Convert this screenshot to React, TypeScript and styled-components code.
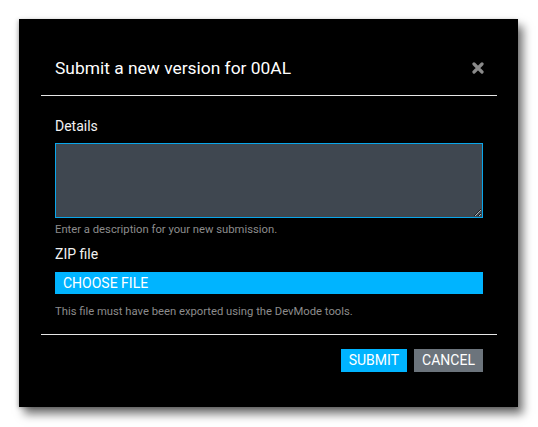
import styled, { createGlobalStyle } from "styled-components";

const GlobalStyle = createGlobalStyle`
  html, body {
    margin: 0;
    padding: 0;
    background: #ffffff;
  }
  body {
    font-family: Roboto, "Liberation Sans", Arial, sans-serif;
  }
`;

const Page = styled.div`
  padding: 19px 20px 20px 19px;
`;

const Modal = styled.div`
  width: 499px;
  height: 388px;
  box-sizing: border-box;
  padding: 0 21px 0 22px;
  background: #000000;
  color: #ffffff;
  box-shadow: 5px 7px 9px rgba(0, 0, 0, 0.55), -1px 1px 4px rgba(0, 0, 0, 0.25);
`;

const Header = styled.div`
  display: flex;
  align-items: center;
  justify-content: space-between;
  padding: 37px 13px 15px 14px;
  border-bottom: 1px solid #e6e6e6;
`;

const Title = styled.h2`
  margin: 0;
  font-size: 17.4px;
  line-height: 24px;
  font-weight: 400;
  color: #ffffff;
`;

const Close = styled.button`
  display: flex;
  padding: 0;
  border: none;
  background: none;
  cursor: pointer;
`;

const Body = styled.div`
  display: flex;
  flex-direction: column;
  padding: 20px 14px 15px;
  border-bottom: 1px solid #e6e6e6;
`;

const Label = styled.label<{ $gap: number }>`
  font-size: 14px;
  line-height: 20px;
  font-weight: 400;
  color: #f2f2f2;
  margin-bottom: ${(p) => p.$gap}px;
`;

const TextArea = styled.textarea`
  display: block;
  box-sizing: border-box;
  width: 100%;
  height: 75px;
  margin: 0;
  border: 1px solid #0aa6ea;
  background: #3f4750;
  color: #ffffff;
  font-family: inherit;
  resize: vertical;
  outline: none;
`;

const Help = styled.div<{ $top: number; $bottom: number }>`
  font-size: 11.25px;
  line-height: 15px;
  color: #8c8c8c;
  margin-top: ${(p) => p.$top}px;
  margin-bottom: ${(p) => p.$bottom}px;
`;

const FileBar = styled.button`
  display: block;
  width: 100%;
  height: 22px;
  padding: 0 8px;
  border: none;
  background: #00b4ff;
  color: #ffffff;
  font-family: inherit;
  font-size: 14px;
  line-height: 22px;
  font-weight: 400;
  text-align: left;
  text-transform: uppercase;
  cursor: pointer;
`;

const Footer = styled.div`
  display: flex;
  justify-content: flex-end;
  gap: 7px;
  padding: 14px 14px 0;
`;

const Button = styled.button<{ $variant: "primary" | "secondary" }>`
  height: 23px;
  min-width: ${(p) => (p.$variant === "primary" ? 66 : 69)}px;
  padding: 0 8px;
  border: none;
  background: ${(p) => (p.$variant === "primary" ? "#00b4ff" : "#6c747c")};
  color: #ffffff;
  font-family: inherit;
  font-size: 14px;
  line-height: 23px;
  font-weight: 400;
  text-transform: uppercase;
  cursor: pointer;
`;

function CloseIcon() {
  return (
    <svg width="12" height="12" viewBox="0 0 12 12">
      <path
        d="M2 2 L10 10 M10 2 L2 10"
        stroke="#8a8a8a"
        strokeWidth="3.2"
        strokeLinecap="round"
      />
    </svg>
  );
}

export default function App() {
  return (
    <Page>
      <GlobalStyle />
      <Modal>
        <Header>
          <Title>Submit a new version for 00AL</Title>
          <Close aria-label="Close">
            <CloseIcon />
          </Close>
        </Header>
        <Body>
          <Label $gap={7}>Details</Label>
          <TextArea />
          <Help $top={4} $bottom={7}>
            Enter a description for your new submission.
          </Help>
          <Label $gap={8}>ZIP file</Label>
          <FileBar>Choose file</FileBar>
          <Help $top={10} $bottom={0}>
            This file must have been exported using the DevMode tools.
          </Help>
        </Body>
        <Footer>
          <Button $variant="primary">Submit</Button>
          <Button $variant="secondary">Cancel</Button>
        </Footer>
      </Modal>
    </Page>
  );
}
